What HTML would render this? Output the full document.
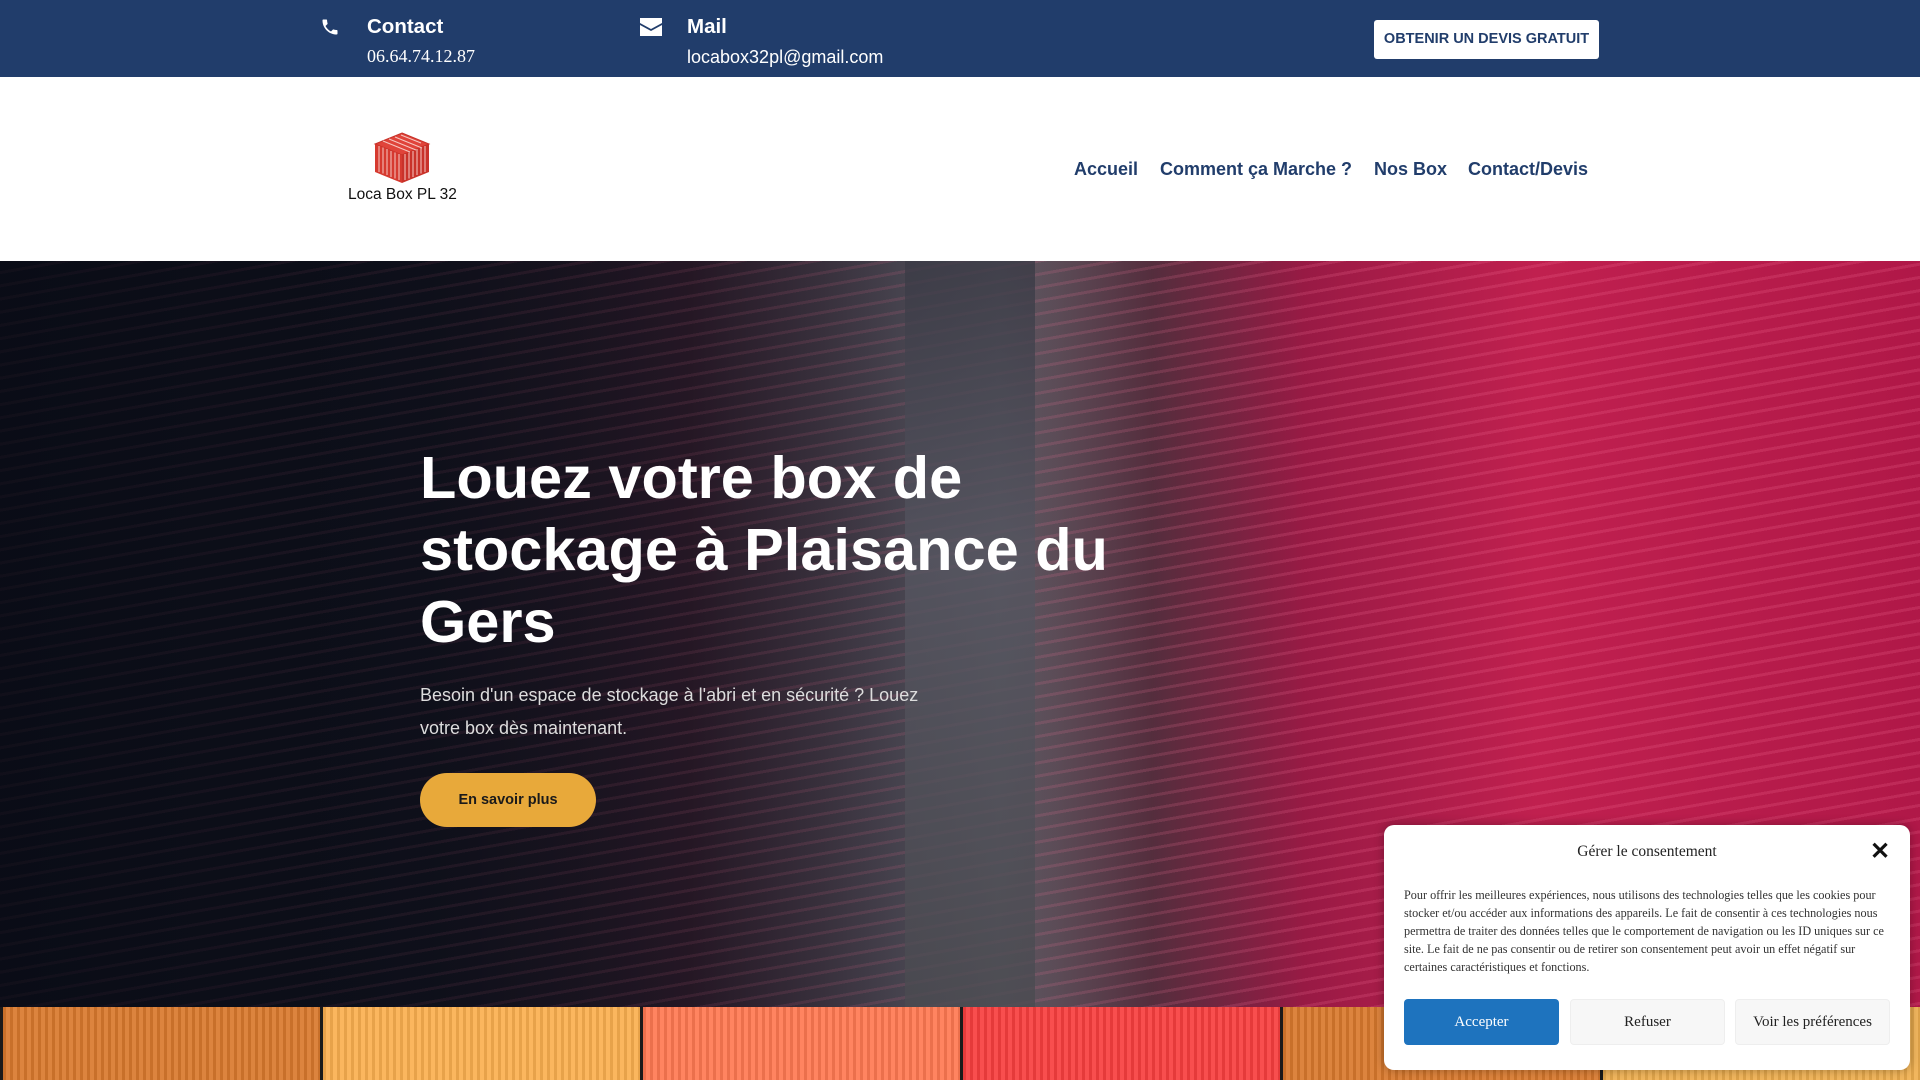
<!DOCTYPE html>
<html><head><meta charset="utf-8"><style>
*{margin:0;padding:0;box-sizing:border-box}
body{width:1920px;height:1080px;overflow:hidden;position:relative;font-family:"Liberation Sans",sans-serif;background:#fff}
.top{position:absolute;left:0;top:0;width:1920px;height:77px;background:#213d6b;color:#fff}
.abs{position:absolute;white-space:nowrap}
.hdr{position:absolute;top:77px;left:0;width:1920px;height:184px;background:#fff}
.nav{font-weight:bold;font-size:18px;color:#213d6b;top:159px}
.hero{position:absolute;top:261px;left:0;width:1920px;height:746px;overflow:hidden;
background:linear-gradient(90deg,#0c0f1a 0%,#141520 22%,#3a2030 36%,#5a5560 47%,#6b6870 52%,#5a3040 60%,#9a1a45 68%,#c0204f 80%,#b01848 100%)}
.stripes{position:absolute;inset:0;background:repeating-linear-gradient(170deg,rgba(255,255,255,0) 0 10px,rgba(255,120,160,.18) 10px 13px)}
.shade{position:absolute;inset:0;background:linear-gradient(90deg,rgba(10,12,22,.85) 0%,rgba(10,12,22,.55) 30%,rgba(10,12,22,.1) 55%,rgba(0,0,0,0) 70%)}
.cont{position:absolute;top:1007px;height:73px;width:320px;border-left:3px solid #1a1a1a;
background-image:repeating-linear-gradient(90deg,rgba(0,0,0,.08) 0 3px,rgba(255,255,255,.08) 3px 7px)}
</style></head><body>
<div class="top">
<svg class="abs" style="left:320px;top:17px" width="20" height="20" viewBox="0 0 24 24"><path fill="#fff" d="M6.6 10.8c1.4 2.8 3.8 5.1 6.6 6.6l2.2-2.2c.3-.3.7-.4 1-.2 1.1.4 2.3.6 3.6.6.6 0 1 .4 1 1V20c0 .6-.4 1-1 1C10.6 21 3 13.4 3 4c0-.6.4-1 1-1h3.5c.6 0 1 .4 1 1 0 1.3.2 2.5.6 3.6.1.3 0 .7-.2 1z"/></svg>
<div class="abs" style="left:367px;top:15px;font-size:20.5px;font-weight:bold">Contact</div>
<div class="abs" style="left:367px;top:46px;font-size:18px;font-family:'Liberation Serif',serif">06.64.74.12.87</div>
<svg class="abs" style="left:640px;top:18px" width="22" height="18" viewBox="0 0 22 18"><path fill="#fff" d="M0 0h22v5L11 11 0 5z M0 7l11 6 11-6v11H0z"/></svg>
<div class="abs" style="left:687px;top:15px;font-size:20.5px;font-weight:bold">Mail</div>
<div class="abs" style="left:687px;top:47px;font-size:18px">locabox32pl@gmail.com</div>
<div class="abs" style="left:1374px;top:20px;width:225px;height:39px;background:#fff;border-radius:3px;color:#213d6b;font-weight:bold;font-size:14.5px;text-align:center;line-height:39px">OBTENIR UN DEVIS GRATUIT</div>
</div>
<div class="hdr"></div>
<svg class="abs" style="left:373px;top:132px" width="58" height="52" viewBox="0 0 58 52">
<path d="M29 1 56 12 29 23 2 12z" fill="#e0443a" stroke="#c73128"/>
<path d="M2 12 29 23v28L2 40z" fill="#d63a30"/>
<path d="M56 12 29 23v28l27-11z" fill="#c9322a"/>
<g stroke="#f6c8c2" stroke-width="1"><path d="M6 14v26M10 15.5v26M14 17v26M18 19v26M22 20.5v26M26 22v26M32 22v26M36 20.5v26M40 19v26M44 17v26M48 15.5v26M52 14v26"/>
<path d="M10 9l27 11M16 7l27 11M22 5l27 11M28 3l20 8"/></g></svg>
<div class="abs" style="left:348px;top:186px;font-size:15.5px;color:#111">Loca Box PL 32</div>
<div class="abs nav" style="left:1074px">Accueil</div>
<div class="abs nav" style="left:1160px">Comment ça Marche ?</div>
<div class="abs nav" style="left:1374px">Nos Box</div>
<div class="abs nav" style="left:1468px">Contact/Devis</div>
<div class="hero"><div class="stripes"></div><div class="shade"></div>
<div style="position:absolute;left:905px;top:0;width:130px;height:746px;background:linear-gradient(#3a3a45,#555560 40%,#4a4a50);opacity:.8"></div>
<div class="abs" style="left:420px;top:181px;font-size:59.5px;font-weight:bold;color:#fff;line-height:72px;white-space:normal;width:740px">Louez votre box de stockage à Plaisance du Gers</div>
<div class="abs" style="left:420px;top:418px;font-size:18px;color:#ddd;line-height:33px;white-space:normal;width:540px">Besoin d'un espace de stockage à l'abri et en sécurité ? Louez votre box dès maintenant.</div>
<div class="abs" style="left:420px;top:512px;width:176px;height:54px;border-radius:27px;background:#e8a93a;color:#1a1a1a;font-weight:bold;font-size:14.5px;text-align:center;line-height:54px">En savoir plus</div>
</div>
<div class="cont" style="left:0;background-color:#d97a2e"></div>
<div class="cont" style="left:320px;background-color:#fbb050"></div>
<div class="cont" style="left:640px;background-color:#ff7a52"></div>
<div class="cont" style="left:960px;background-color:#f83f3f"></div>
<div class="cont" style="left:1280px;background-color:#d97a2e"></div>
<div class="cont" style="left:1600px;background-color:#f0b050"></div>
<div class="abs" style="left:1384px;top:825px;width:526px;height:245px;background:#fff;border-radius:10px;box-shadow:0 0 10px rgba(0,0,0,.3)">
<div class="abs" style="left:0;width:526px;top:18px;text-align:center;font-family:'Liberation Serif',serif;font-size:15.5px;color:#222">Gérer le consentement</div>
<div class="abs" style="left:486px;top:12px;font-size:24px;font-weight:bold;color:#111">✕</div>
<div class="abs" style="left:20px;top:61px;width:486px;white-space:normal;font-family:'Liberation Serif',serif;font-size:12.2px;line-height:18px;color:#333">Pour offrir les meilleures expériences, nous utilisons des technologies telles que les cookies pour stocker et/ou accéder aux informations des appareils. Le fait de consentir à ces technologies nous permettra de traiter des données telles que le comportement de navigation ou les ID uniques sur ce site. Le fait de ne pas consentir ou de retirer son consentement peut avoir un effet négatif sur certaines caractéristiques et fonctions.</div>
<div class="abs" style="left:20px;top:174px;width:155px;height:46px;background:#1e73be;border-radius:4px;color:#fff;text-align:center;line-height:46px;font-family:'Liberation Serif',serif;font-size:15px">Accepter</div>
<div class="abs" style="left:186px;top:174px;width:155px;height:46px;background:#f7f7f7;border:1px solid #eee;border-radius:4px;color:#222;text-align:center;line-height:44px;font-family:'Liberation Serif',serif;font-size:15px">Refuser</div>
<div class="abs" style="left:351px;top:174px;width:155px;height:46px;background:#f7f7f7;border:1px solid #eee;border-radius:4px;color:#222;text-align:center;line-height:44px;font-family:'Liberation Serif',serif;font-size:15px">Voir les préférences</div>
</div>
</body></html>
